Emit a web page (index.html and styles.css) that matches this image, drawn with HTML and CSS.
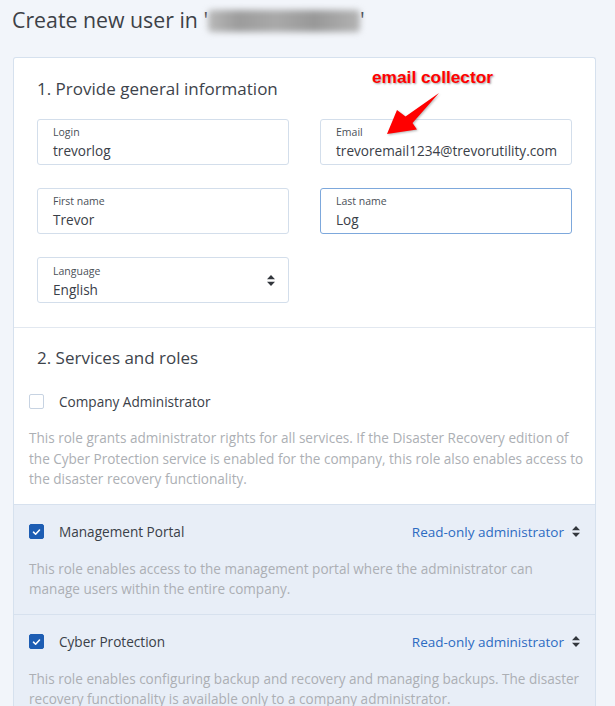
FILE: index.html
```html
<!DOCTYPE html>
<html lang="en">
<head>
<meta charset="utf-8">
<title>Create new user</title>
<link rel="stylesheet" href="styles.css">
</head>
<body>
<header class="header">
  <h1 class="title">Create new user in '<span class="blurred"></span>'</h1>
</header>

<main class="card">
  <section class="general">
    <h2 class="section-title">1. Provide general information</h2>
    <div class="fields">
      <div class="field">
        <span class="field-label">Login</span>
        <span class="field-value">trevorlog</span>
      </div>
      <div class="field">
        <span class="field-label">Email</span>
        <span class="field-value">trevoremail1234@trevorutility.com</span>
      </div>
      <div class="field">
        <span class="field-label">First name</span>
        <span class="field-value">Trevor</span>
      </div>
      <div class="field field-focused">
        <span class="field-label">Last name</span>
        <span class="field-value">Log</span>
      </div>
      <div class="field field-select">
        <div class="field-body">
          <span class="field-label">Language</span>
          <span class="field-value">English</span>
        </div>
        <svg class="sort-icon" viewBox="0 0 8 11" width="8" height="11"><path d="M4 0 L8 4.2 L0 4.2 Z M4 11 L8 6.8 L0 6.8 Z"/></svg>
      </div>
    </div>
  </section>

  <section class="roles">
    <h2 class="section-title roles-title">2. Services and roles</h2>

    <div class="role">
      <div class="role-row">
        <span class="checkbox"></span>
        <span class="role-name">Company Administrator</span>
      </div>
      <p class="role-desc">This role grants administrator rights for all services. If the Disaster Recovery edition of the Cyber Protection service is enabled for the company, this role also enables access to the disaster recovery functionality.</p>
    </div>

    <div class="role role-enabled">
      <div class="role-row">
        <span class="checkbox checkbox-checked"><svg viewBox="0 0 16 16" width="16" height="16"><path d="M4.3 8.2 L6.9 10.7 L11.7 5.6" fill="none" stroke="#fff" stroke-width="1.9" stroke-linecap="round" stroke-linejoin="round"/></svg></span>
        <span class="role-name">Management Portal</span>
        <span class="role-select">Read-only administrator <svg class="sort-icon" viewBox="0 0 8 11" width="8" height="11"><path d="M4 0 L8 4.2 L0 4.2 Z M4 11 L8 6.8 L0 6.8 Z"/></svg></span>
      </div>
      <p class="role-desc">This role enables access to the management portal where the administrator can manage users within the entire company.</p>
    </div>

    <div class="role role-enabled">
      <div class="role-row">
        <span class="checkbox checkbox-checked"><svg viewBox="0 0 16 16" width="16" height="16"><path d="M4.3 8.2 L6.9 10.7 L11.7 5.6" fill="none" stroke="#fff" stroke-width="1.9" stroke-linecap="round" stroke-linejoin="round"/></svg></span>
        <span class="role-name">Cyber Protection</span>
        <span class="role-select">Read-only administrator <svg class="sort-icon" viewBox="0 0 8 11" width="8" height="11"><path d="M4 0 L8 4.2 L0 4.2 Z M4 11 L8 6.8 L0 6.8 Z"/></svg></span>
      </div>
      <p class="role-desc">This role enables configuring backup and recovery and managing backups. The disaster recovery functionality is available only to a company administrator.</p>
    </div>
  </section>
</main>

<div class="annotation">
  <span class="annotation-text">email collector</span>
  <svg class="annotation-arrow" viewBox="0 0 60 50" width="60" height="50"><path d="M3 43 L13 19 L21.5 25.5 L55 2 L28.5 32 L33 38.5 Z" fill="#ff0000"/></svg>
</div>
</body>
</html>
```

FILE: styles.css
```css
html, body {
  margin: 0;
  padding: 0;
}

body {
  background: #f2f5fa;
  font-family: "Open Sans", "Noto Sans", sans-serif;
  color: #3a3f47;
  position: relative;
  min-height: 706px;
  overflow: hidden;
}

.header {
  padding: 6px 0 0 12px;
}

.title {
  margin: 0;
  font-size: 21.3px;
  font-weight: 400;
  line-height: 28px;
  color: #3d4147;
  white-space: nowrap;
}

.blurred {
  display: inline-block;
  width: 152px;
  height: 22px;
  vertical-align: -4px;
  background: linear-gradient(90deg, #b9b9b9 0%, #9c9c9c 20%, #a9a9a9 45%, #989898 70%, #b3b3b3 100%);
  filter: blur(3px);
  border-radius: 4px;
}

.card {
  margin: 23px 19px 0 13px;
  background: #ffffff;
  border: 1px solid #d6e1ee;
  border-bottom: none;
  border-radius: 3px 3px 0 0;
  min-height: 700px;
}

.section-title {
  margin: 0;
  font-size: 17px;
  font-weight: 400;
  line-height: 24px;
  color: #3d434b;
}

.general {
  padding: 19px 23px 24px;
  border-bottom: 1px solid #e2e8f0;
}

.fields {
  margin-top: 18px;
  display: grid;
  grid-template-columns: 252px 252px;
  column-gap: 31px;
  row-gap: 23px;
}

.field {
  height: 46px;
  box-sizing: border-box;
  border: 1px solid #d3deeb;
  border-radius: 3px;
  padding: 5px 15px 0;
  display: flex;
  flex-direction: column;
}

.field-focused {
  border-color: #7da8dc;
}

.field-select {
  flex-direction: row;
  align-items: center;
  padding: 0 13px 0 15px;
}

.field-body {
  flex: 1;
  display: flex;
  flex-direction: column;
  padding-top: 1px;
}

.field-label {
  font-size: 10.5px;
  line-height: 14px;
  color: #4a5058;
}

.field-value {
  margin-top: 3px;
  font-size: 13.6px;
  line-height: 17px;
  color: #3a4048;
  white-space: nowrap;
}

.sort-icon {
  fill: #33373d;
  flex: none;
}

.roles {
  padding-top: 18px;
}

.roles-title {
  margin: 0 0 21px 23px;
}

.role {
  padding: 0 9px 14px 15px;
}

.role-enabled {
  background: #e8eef7;
  border-top: 1px solid #d7e1ee;
  padding-top: 17px;
  padding-bottom: 14px;
}

.role-row {
  display: flex;
  align-items: center;
  height: 20px;
}

.checkbox {
  width: 15px;
  height: 15px;
  box-sizing: border-box;
  border: 1px solid #c7d3e2;
  border-radius: 2px;
  background: #ffffff;
  flex: none;
  display: flex;
  align-items: center;
  justify-content: center;
}

.checkbox-checked {
  background: #1d5db3;
  border-color: #1d5db3;
}

.role-name {
  margin-left: 15px;
  font-size: 13.6px;
  color: #3a4048;
  flex: 1;
}

.role-select {
  display: flex;
  align-items: center;
  gap: 8px;
  margin-right: 6px;
  font-size: 13.5px;
  color: #2d6bc2;
}

.role-desc {
  margin: 17px 0 0;
  padding-right: 1px;
  font-size: 13.55px;
  line-height: 20.5px;
  color: #acafb4;
}

.annotation {
  position: absolute;
  left: 372px;
  top: 66px;
  width: 130px;
  height: 72px;
}

.annotation-text {
  display: block;
  font-family: "Liberation Sans", Arial, sans-serif;
  font-weight: 700;
  font-size: 17.3px;
  line-height: 22px;
  color: #ff0000;
  text-shadow: 1px 1px 2px rgba(80, 80, 80, 0.55);
  white-space: nowrap;
}

.annotation-arrow {
  position: absolute;
  left: 12px;
  top: 25px;
  filter: drop-shadow(1px 1px 1px rgba(90, 90, 90, 0.45));
}
```
